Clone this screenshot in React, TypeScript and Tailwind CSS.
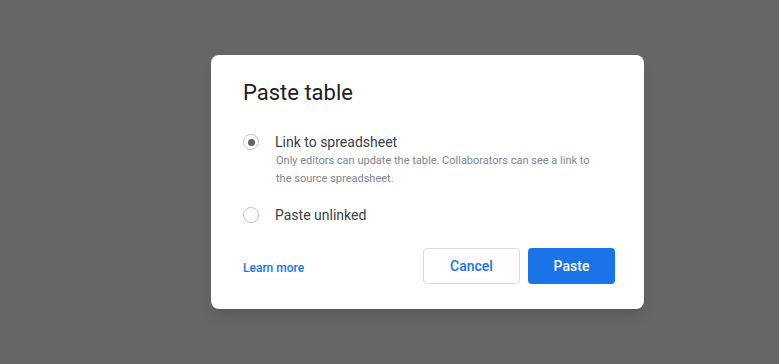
import React from "react";

function Radio({ checked }: { checked?: boolean }) {
  return (
    <span className="flex h-[16px] w-[16px] shrink-0 items-center justify-center rounded-full border-[1.5px] border-[#c4c7c5]">
      {checked && <span className="h-[7px] w-[7px] rounded-full bg-[#5f6368]" />}
    </span>
  );
}

export default function App() {
  return (
    <div className="h-[364px] w-full bg-[#666666] pl-[211px] pt-[55px] font-['Roboto',sans-serif]">
      <div className="flex h-[254px] w-[433px] flex-col rounded-[8px] bg-white px-8 pt-[24px] shadow-lg">
        <h1 className="text-[22px] leading-[28px] text-[#202124]">Paste table</h1>

        <div className="mt-[25px] flex items-center gap-4">
          <Radio checked />
          <span className="text-[14px] leading-[20px] text-[#3c4043]">Link to spreadsheet</span>
        </div>
        <p className="ml-[33px] w-[318px] text-[11px] leading-[18px] text-[#80868b]">
          Only editors can update the table. Collaborators can see a link to the source spreadsheet.
        </p>

        <div className="mt-[17px] flex items-center gap-4">
          <Radio />
          <span className="text-[14px] leading-[20px] text-[#3c4043]">Paste unlinked</span>
        </div>

        <div className="mt-[23px] flex items-center">
          <a className="mt-[4px] text-[12px] font-medium text-[#1a73e8]">Learn more</a>
          <div className="ml-auto flex gap-2">
            <button className="h-[36px] w-[97px] rounded-[4px] border border-[#dadce0] bg-white text-[14px] font-medium text-[#1a73e8]">
              Cancel
            </button>
            <button className="mr-[-3px] h-[36px] w-[87px] rounded-[4px] bg-[#1a73e8] text-[14px] font-medium text-white">
              Paste
            </button>
          </div>
        </div>
      </div>
    </div>
  );
}
